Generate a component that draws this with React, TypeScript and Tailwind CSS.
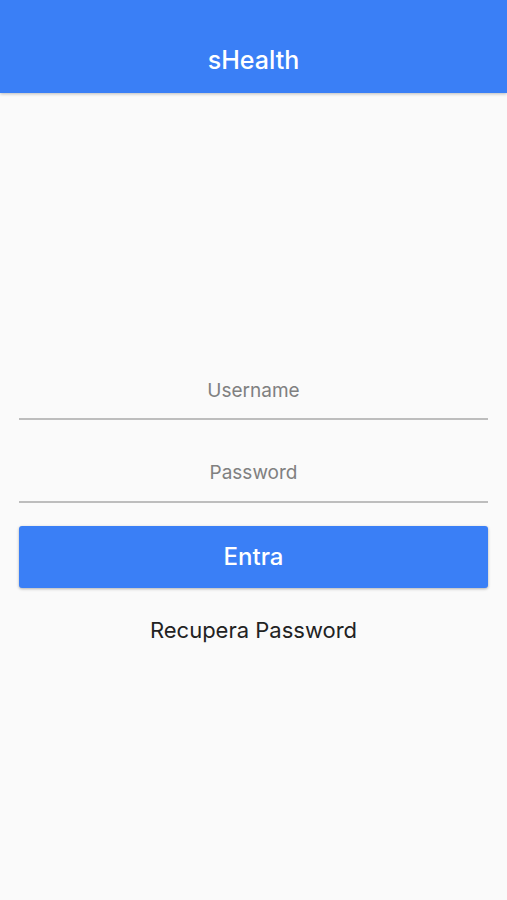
export default function App() {
  return (
    <div className="min-h-[900px] bg-[#fafafa] font-['Inter',sans-serif]">
      <header className="flex h-[93px] items-end justify-center bg-[#3a7ff6] pb-[20px] shadow-[0_1px_3px_rgba(0,0,0,0.25)]">
        <h1 className="text-[25px] font-medium leading-none text-white">sHealth</h1>
      </header>

      <main className="flex flex-col px-[19px] pt-[286px]">
        <div className="flex h-[41px] items-start justify-center border-b-2 border-[#bdbdbd]">
          <span className="text-[19px] leading-[24px] text-[#808080]">Username</span>
        </div>
        <div className="mt-[41px] flex h-[42px] items-start justify-center border-b-2 border-[#bdbdbd]">
          <span className="text-[19px] leading-[24px] text-[#808080]">Password</span>
        </div>
        <button className="mt-[23px] flex h-[62px] items-center justify-center rounded-[3px] bg-[#3a7ff6] text-[24px] font-medium text-white shadow-[0_1px_3px_rgba(0,0,0,0.3)]">
          Entra
        </button>
        <p className="mt-[29px] text-center text-[22px] leading-[26px] text-[#222]">Recupera Password</p>
      </main>
    </div>
  );
}
